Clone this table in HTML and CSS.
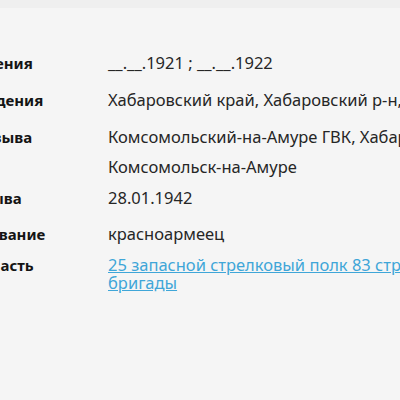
FILE: index.html
```html
<!DOCTYPE html>
<html lang="ru">
<head>
<meta charset="utf-8">
<link rel="stylesheet" href="styles.css">
</head>
<body>
<div class="topbar"></div>
<div class="card">
  <div class="row r1">
    <div class="label">Дата рождения</div>
    <div class="value">__.__.1921 ; __.__.1922</div>
  </div>
  <div class="row r2">
    <div class="label">Место рождения</div>
    <div class="value">Хабаровский край, Хабаровский р-н, с. Николаевка</div>
  </div>
  <div class="row r3">
    <div class="label">Место призыва</div>
    <div class="value">
      <div class="line">Комсомольский-на-Амуре ГВК, Хабаровский край,</div>
      <div class="line second">Комсомольск-на-Амуре</div>
    </div>
  </div>
  <div class="row r4">
    <div class="label">Дата призыва</div>
    <div class="value">28.01.1942</div>
  </div>
  <div class="row r5">
    <div class="label">Воинское звание</div>
    <div class="value">красноармеец</div>
  </div>
  <div class="row r6">
    <div class="label">Воинская часть</div>
    <div class="value"><a class="link" href="#">25 запасной стрелковый полк 83 стрелковой бригады</a></div>
  </div>
</div>
</body>
</html>
```
FILE: styles.css
```css
html, body {
  margin: 0;
  padding: 0;
  background: #f5f5f5;
  overflow: hidden;
  width: 400px;
  height: 400px;
}
body {
  font-family: "Noto Sans", "Open Sans", sans-serif;
  font-size: 16.5px;
  color: #262626;
}
.topbar {
  height: 8px;
  background: #efefef;
}
.card {
  margin-left: -87px;
  width: 600px;
  padding-top: 46px;
  display: flex;
  flex-direction: column;
}
.row {
  display: grid;
  grid-template-columns: 195px 1fr;
  line-height: 18px;
}
.label {
  font-size: 15px;
  font-weight: 700;
  color: #141414;
  white-space: nowrap;
  overflow: hidden;
}
.value {
  white-space: nowrap;
}
.r2, .r3 { margin-top: 19px; }
.r4 { margin-top: 13px; }
.r5 { margin-top: 18px; }
.r6 { margin-top: 13px; }
.second { margin-top: 12px; }
.r6 .value { white-space: normal; width: 380px; }
.link {
  color: #3fa6d8;
  text-decoration: underline;
}
```
